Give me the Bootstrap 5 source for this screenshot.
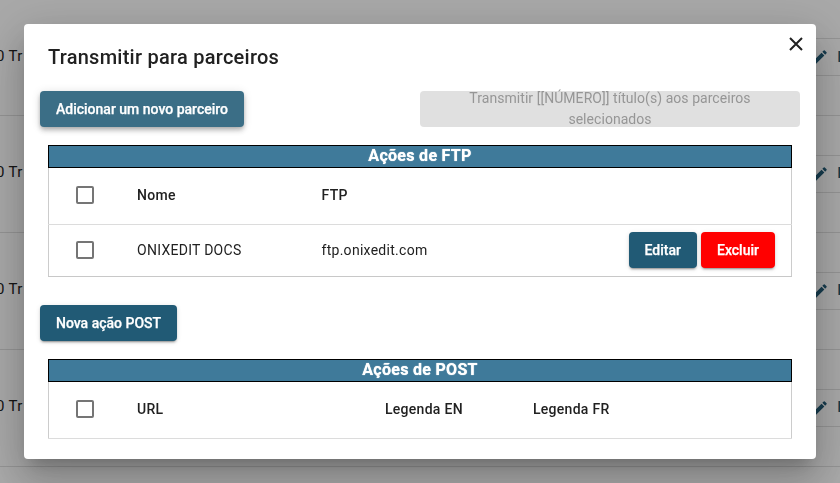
<!DOCTYPE html>
<html lang="pt">
<head>
<meta charset="utf-8">
<title>Transmitir para parceiros</title>
<link rel="stylesheet" href="https://cdn.jsdelivr.net/npm/bootstrap@5.3.0/dist/css/bootstrap.min.css">
<style>
html,body{height:483px;overflow:hidden}
body{font-family:Roboto,"Liberation Sans",sans-serif;font-size:14px;color:#212121;background:#fff}
.bg-row{height:117px;border-bottom:1px solid #e0e0e0}
.bg-first{height:115.5px}
.bg-txt{white-space:nowrap;margin-left:-4px;margin-bottom:2px;letter-spacing:.02em;font-size:15px}
.bg-act{height:36px;width:41px;border-top:1px solid #e0e0e0;border-bottom:1px solid #e0e0e0;color:#215a75;gap:8.5px;flex:none;overflow:hidden;padding-left:7px;margin-right:-12px;box-sizing:content-box}
.bg-dim{position:fixed;inset:0;background:rgba(0,0,0,.34);z-index:10}
.dlg{position:fixed;left:24px;top:24px;width:792px;height:435px;background:#fff;border-radius:4px;z-index:20;
 box-shadow:0 11px 15px -7px rgba(0,0,0,.2),0 24px 38px 3px rgba(0,0,0,.14),0 9px 46px 8px rgba(0,0,0,.12);padding:0 16px}
.dlg-x{position:absolute;top:11px;right:11px;width:18px;height:18px;padding:0;border:0;background:none;line-height:0}
.dlg-title{font-size:20px;font-weight:500;line-height:32px;letter-spacing:.0125em;margin:17px 0 0 8px;color:#212121}
.acts{margin-top:18px;height:36px}
.mbtn{font-family:inherit;font-size:14px;font-weight:500;line-height:20px;color:#fff;border:0;border-radius:4px;padding:8px 16px;height:36px;white-space:nowrap;-webkit-text-stroke:.25px #fff;
 box-shadow:0 3px 1px -2px rgba(0,0,0,.2),0 2px 2px 0 rgba(0,0,0,.14),0 1px 5px 0 rgba(0,0,0,.12)}
.mbtn:hover,.mbtn:focus,.mbtn:active{color:#fff}
.mbtn-raised{background:#3b6e86;box-shadow:0 2px 4px -1px rgba(0,0,0,.2),0 4px 5px 0 rgba(0,0,0,.14),0 1px 10px 0 rgba(0,0,0,.12)}
.mbtn-dark{background:#215a75}
.mbtn-red{background:#f00}
.mbtn-off{width:380px;background:#e0e0e0;color:#969696;border-radius:4px;font-size:14px;line-height:21px;letter-spacing:.05px;text-align:center;padding:0 20px;height:36px}
.sect{margin:0 8px}
.sect-first{margin-top:18px}
.sect-head{height:23px;line-height:20px;background:#3f7a9a;border:1px solid #000;color:#fff;font-size:16px;font-weight:700;letter-spacing:.3px;text-align:center;text-shadow:0 0 1px #fff}
.sect-table{table-layout:fixed;width:100%;margin:0;border-left:1px solid #ccc;border-right:1px solid #ccc;color:#212121;font-size:14px;letter-spacing:.02em}
.sect-table td,.sect-table th{padding:0;vertical-align:middle;border-bottom:1px solid #dcdcdc;font-weight:400}
.sect-table thead th{height:56px;font-weight:500}
.sect-table.post-table thead th{height:57px}
.sect-table tbody td{height:52px}
.last-line tbody td{border-bottom-color:#c8c8c8}
.mbox{display:block;width:18px;height:18px;border:2px solid #757575;border-radius:2px;margin-left:27px;position:relative;top:-.5px}
.c1{width:88.5px}.c2{width:184.5px}
.p1{width:88.5px}.p2{width:248px}.p3{width:148px}
.post-wrap{margin-top:28px}
.post-sect{margin-top:18px}
.btns{padding-right:16px}
</style>
</head>
<body>
<div aria-hidden="true">
  <div class="bg-row bg-first d-flex justify-content-between align-items-center"><span class="bg-txt">0 Tr</span><span class="bg-act d-flex align-items-center"><svg width="18" height="18" viewBox="0 0 24 24" fill="#215a75"><path d="M3 17.25V21h3.75L17.81 9.94l-3.75-3.75L3 17.25zM20.71 7.04a1 1 0 0 0 0-1.41l-2.34-2.34a1 1 0 0 0-1.41 0l-1.83 1.83 3.75 3.75 1.83-1.83z"/></svg><b>E</b></span></div>
  <div class="bg-row d-flex justify-content-between align-items-center"><span class="bg-txt">0 Tr</span><span class="bg-act d-flex align-items-center"><svg width="18" height="18" viewBox="0 0 24 24" fill="#215a75"><path d="M3 17.25V21h3.75L17.81 9.94l-3.75-3.75L3 17.25zM20.71 7.04a1 1 0 0 0 0-1.41l-2.34-2.34a1 1 0 0 0-1.41 0l-1.83 1.83 3.75 3.75 1.83-1.83z"/></svg><b>E</b></span></div>
  <div class="bg-row d-flex justify-content-between align-items-center"><span class="bg-txt">0 Tr</span><span class="bg-act d-flex align-items-center"><svg width="18" height="18" viewBox="0 0 24 24" fill="#215a75"><path d="M3 17.25V21h3.75L17.81 9.94l-3.75-3.75L3 17.25zM20.71 7.04a1 1 0 0 0 0-1.41l-2.34-2.34a1 1 0 0 0-1.41 0l-1.83 1.83 3.75 3.75 1.83-1.83z"/></svg><b>E</b></span></div>
  <div class="bg-row d-flex justify-content-between align-items-center"><span class="bg-txt">0 Tr</span><span class="bg-act d-flex align-items-center"><svg width="18" height="18" viewBox="0 0 24 24" fill="#215a75"><path d="M3 17.25V21h3.75L17.81 9.94l-3.75-3.75L3 17.25zM20.71 7.04a1 1 0 0 0 0-1.41l-2.34-2.34a1 1 0 0 0-1.41 0l-1.83 1.83 3.75 3.75 1.83-1.83z"/></svg><b>E</b></span></div>
</div>
<div class="bg-dim"></div>
<div class="dlg" role="dialog">
  <button type="button" class="dlg-x" aria-label="Fechar"><svg width="18" height="18" viewBox="0 0 18 18"><path d="M3 3 15 15M15 3 3 15" stroke="#212121" stroke-width="2" fill="none"/></svg></button>
  <h2 class="dlg-title">Transmitir para parceiros</h2>
  <div class="acts d-flex justify-content-between">
    <button type="button" class="btn mbtn mbtn-raised">Adicionar um novo parceiro</button>
    <div class="mbtn-off d-flex align-items-center justify-content-center">Transmitir [[NÚMERO]] título(s) aos parceiros selecionados</div>
  </div>
  <div class="sect sect-first">
    <div class="sect-head">Ações de FTP</div>
    <table class="table sect-table last-line">
      <colgroup><col class="c1"><col class="c2"><col><col></colgroup>
      <thead><tr><th><span class="mbox"></span></th><th>Nome</th><th>FTP</th><th></th></tr></thead>
      <tbody><tr><td><span class="mbox"></span></td><td>ONIXEDIT DOCS</td><td>ftp.onixedit.com</td>
        <td><div class="d-flex justify-content-end gap-1 btns"><button type="button" class="btn mbtn mbtn-dark">Editar</button><button type="button" class="btn mbtn mbtn-red">Excluir</button></div></td></tr></tbody>
    </table>
  </div>
  <div class="post-wrap"><button type="button" class="btn mbtn mbtn-dark">Nova ação POST</button></div>
  <div class="sect post-sect">
    <div class="sect-head">Ações de POST</div>
    <table class="table sect-table post-table">
      <colgroup><col class="p1"><col class="p2"><col class="p3"><col></colgroup>
      <thead><tr><th><span class="mbox"></span></th><th>URL</th><th>Legenda EN</th><th>Legenda FR</th></tr></thead>
    </table>
  </div>
</div>
</body>
</html>
